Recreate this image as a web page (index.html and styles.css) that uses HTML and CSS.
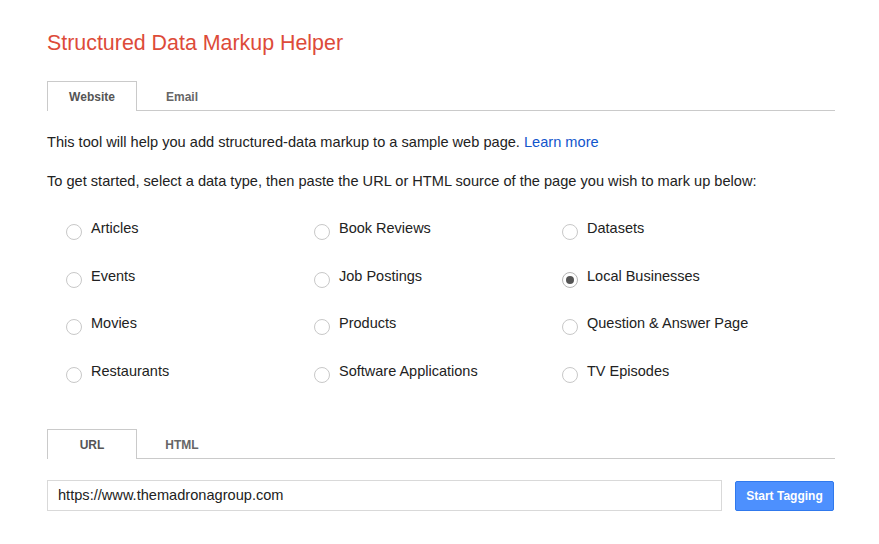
FILE: index.html
```html
<!DOCTYPE html>
<html>
<head>
<meta charset="utf-8">
<title>Structured Data Markup Helper</title>
<link rel="stylesheet" href="styles.css">
</head>
<body>
<div class="page">
  <h1 class="title">Structured Data Markup Helper</h1>
  <div class="tabs tabs-top">
    <div class="tab active">Website</div>
    <div class="tab">Email</div>
  </div>
  <p class="intro">This tool will help you add structured-data markup to a sample web page. <a href="#" class="link">Learn more</a></p>
  <p class="intro second">To get started, select a data type, then paste the URL or HTML source of the page you wish to mark up below:</p>
  <div class="types">
    <label class="opt"><span class="radio"></span><span class="lbl">Articles</span></label>
    <label class="opt"><span class="radio"></span><span class="lbl">Book Reviews</span></label>
    <label class="opt"><span class="radio"></span><span class="lbl">Datasets</span></label>
    <label class="opt"><span class="radio"></span><span class="lbl">Events</span></label>
    <label class="opt"><span class="radio"></span><span class="lbl">Job Postings</span></label>
    <label class="opt"><span class="radio checked"></span><span class="lbl">Local Businesses</span></label>
    <label class="opt"><span class="radio"></span><span class="lbl">Movies</span></label>
    <label class="opt"><span class="radio"></span><span class="lbl">Products</span></label>
    <label class="opt"><span class="radio"></span><span class="lbl">Question &amp; Answer Page</span></label>
    <label class="opt"><span class="radio"></span><span class="lbl">Restaurants</span></label>
    <label class="opt"><span class="radio"></span><span class="lbl">Software Applications</span></label>
    <label class="opt"><span class="radio"></span><span class="lbl">TV Episodes</span></label>
  </div>
  <div class="tabs tabs-source">
    <div class="tab active">URL</div>
    <div class="tab">HTML</div>
  </div>
  <div class="form">
    <div class="url-input">https://www.themadronagroup.com</div>
    <button class="btn">Start Tagging</button>
  </div>
</div>
</body>
</html>
```

FILE: styles.css
```css
html, body {
  margin: 0;
  padding: 0;
  background: #fff;
}
body {
  font-family: "Liberation Sans", Arial, sans-serif;
  color: #222;
}
.page {
  padding-left: 47px;
  width: 788px;
}
.title {
  margin: 31px 0 0;
  font-size: 21.4px;
  line-height: 24px;
  font-weight: normal;
  color: #dd4b39;
}
.tabs {
  display: flex;
  border-bottom: 1px solid #cacaca;
  height: 29px;
}
.tabs-top {
  margin-top: 26px;
}
.tab {
  width: 90px;
  box-sizing: border-box;
  height: 29px;
  border: 1px solid transparent;
  border-bottom: 0;
  font-size: 12px;
  font-weight: bold;
  color: #666;
  display: flex;
  align-items: center;
  justify-content: center;
  padding-top: 1px;
}
.tab.active {
  border-color: #cacaca;
  background: #fff;
  height: 30px;
  margin-bottom: -1px;
  color: #555;
}
.intro {
  margin: 21px 0 0;
  font-size: 14.6px;
  line-height: 20px;
}
.intro.second {
  margin-top: 19px;
}
.link {
  color: #1155cc;
  text-decoration: none;
}
.types {
  margin-top: 27px;
  padding-left: 19px;
  display: grid;
  grid-template-columns: 248px 248px 248px;
  grid-auto-rows: 22px;
  row-gap: 25.7px;
}
.opt {
  display: flex;
  align-items: flex-start;
  font-size: 14.5px;
  line-height: 20px;
  color: #222;
}
.radio {
  width: 16px;
  height: 16px;
  box-sizing: border-box;
  border: 1px solid #c8c8c8;
  border-radius: 50%;
  margin-top: 6px;
  margin-right: 9px;
  flex: none;
  background: #fff;
  display: flex;
  align-items: center;
  justify-content: center;
}
.radio.checked {
  border-color: #b5b5b5;
}
.radio.checked::after {
  content: "";
  width: 8px;
  height: 8px;
  border-radius: 50%;
  background: #555;
}
.tabs-source {
  margin-top: 46px;
}
.form {
  margin-top: 21px;
  width: 787px;
  display: flex;
  align-items: center;
  gap: 13px;
}
.url-input {
  flex: 1;
  height: 31px;
  box-sizing: border-box;
  border: 1px solid #d9d9d9;
  padding: 0 10px;
  font-size: 14.6px;
  line-height: 29px;
  color: #222;
}
.btn {
  width: 99px;
  height: 30px;
  box-sizing: border-box;
  border: 1px solid #3079ed;
  border-radius: 2px;
  background: #4d90fe;
  color: #fff;
  font-family: "Liberation Sans", Arial, sans-serif;
  font-size: 12px;
  font-weight: bold;
  padding: 0;
}
```
